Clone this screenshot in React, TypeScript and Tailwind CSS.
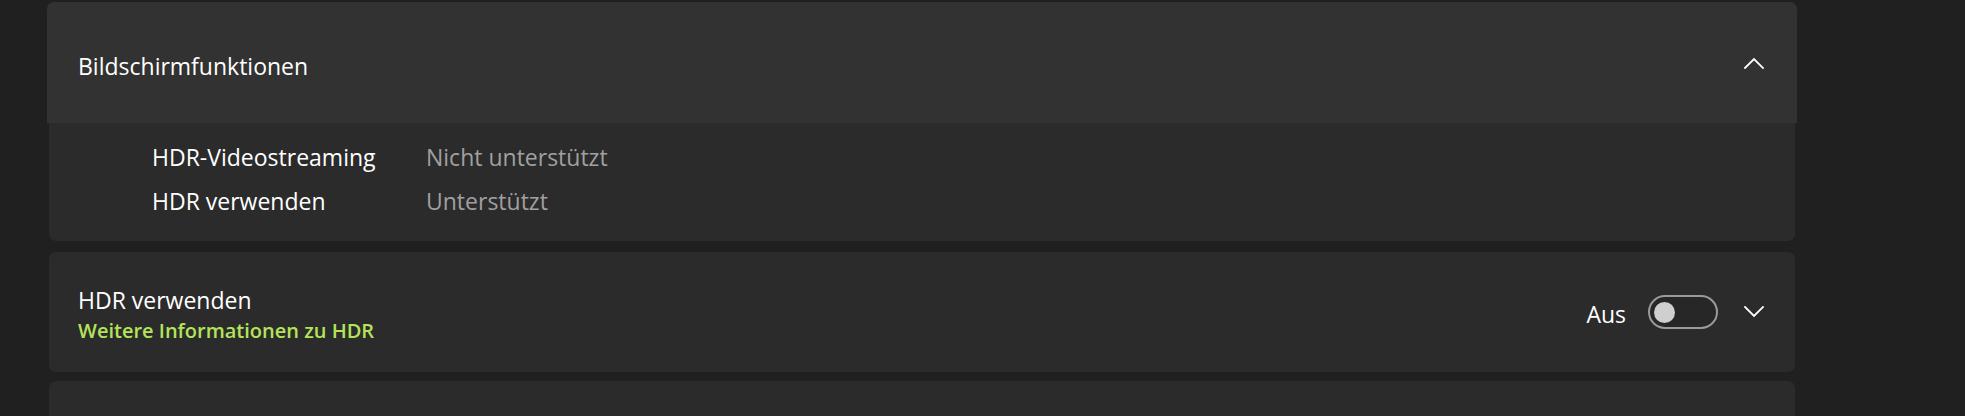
import React from "react";

function ChevronUp() {
  return (
    <svg width="20" height="12" viewBox="0 0 20 12" fill="none">
      <path d="M1 11 L10 2 L19 11" stroke="#ffffff" strokeWidth="1.8" strokeLinecap="square" />
    </svg>
  );
}

function ChevronDown() {
  return (
    <svg width="20" height="12" viewBox="0 0 20 12" fill="none">
      <path d="M1 1 L10 10 L19 1" stroke="#ffffff" strokeWidth="1.8" strokeLinecap="square" />
    </svg>
  );
}

function Toggle() {
  return (
    <div className="flex h-[34px] w-[70px] items-center rounded-full border-2 border-[#9a9a9a] bg-[#272727] pl-[4px]">
      <div className="h-[21px] w-[21px] rounded-full bg-[#cfcfcf]" />
    </div>
  );
}

const rows = [
  { label: "HDR-Videostreaming", value: "Nicht unterstützt" },
  { label: "HDR verwenden", value: "Unterstützt" },
];

export default function App() {
  return (
    <div
      className="h-screen w-full overflow-hidden bg-[#202020] pt-[2px] text-white"
      style={{ fontFamily: '"Open Sans", "Noto Sans", sans-serif' }}
    >
      <div className="ml-[47px] w-[1750px]">
        {/* Bildschirmfunktionen expander */}
        <div className="flex h-[121px] items-center justify-between rounded-t-[7px] bg-[#323232] pl-[31px] pr-[33px]">
          <span className="mt-[7px] text-[23px] leading-[31px]">Bildschirmfunktionen</span>
          <ChevronUp />
        </div>
        <div className="mx-[2px] h-[118px] rounded-b-[7px] bg-[#2b2b2b] pl-[103px] pt-[12px]">
          {rows.map((r) => (
            <div key={r.label} className="flex text-[23px] leading-[44px]">
              <span className="w-[274px]">{r.label}</span>
              <span className="text-[#a0a0a0]">{r.value}</span>
            </div>
          ))}
        </div>

        {/* HDR verwenden card */}
        <div className="mx-[2px] mt-[11px] flex h-[120px] items-center justify-between rounded-[7px] bg-[#2b2b2b] pl-[29px] pr-[31px]">
          <div className="mt-[8px] flex flex-col">
            <span className="text-[23px] leading-[30px]">HDR verwenden</span>
            <span className="text-[20px] font-semibold leading-[32px] text-[#b4e35a]">
              Weitere Informationen zu HDR
            </span>
          </div>
          <div className="flex items-center">
            <span className="mt-[4px] text-[23px] leading-[31px]">Aus</span>
            <div className="ml-[22px]">
              <Toggle />
            </div>
            <div className="ml-[26px]">
              <ChevronDown />
            </div>
          </div>
        </div>

        <div className="mx-[2px] mt-[9px] h-[120px] rounded-t-[7px] bg-[#2b2b2b]" />
      </div>
    </div>
  );
}
